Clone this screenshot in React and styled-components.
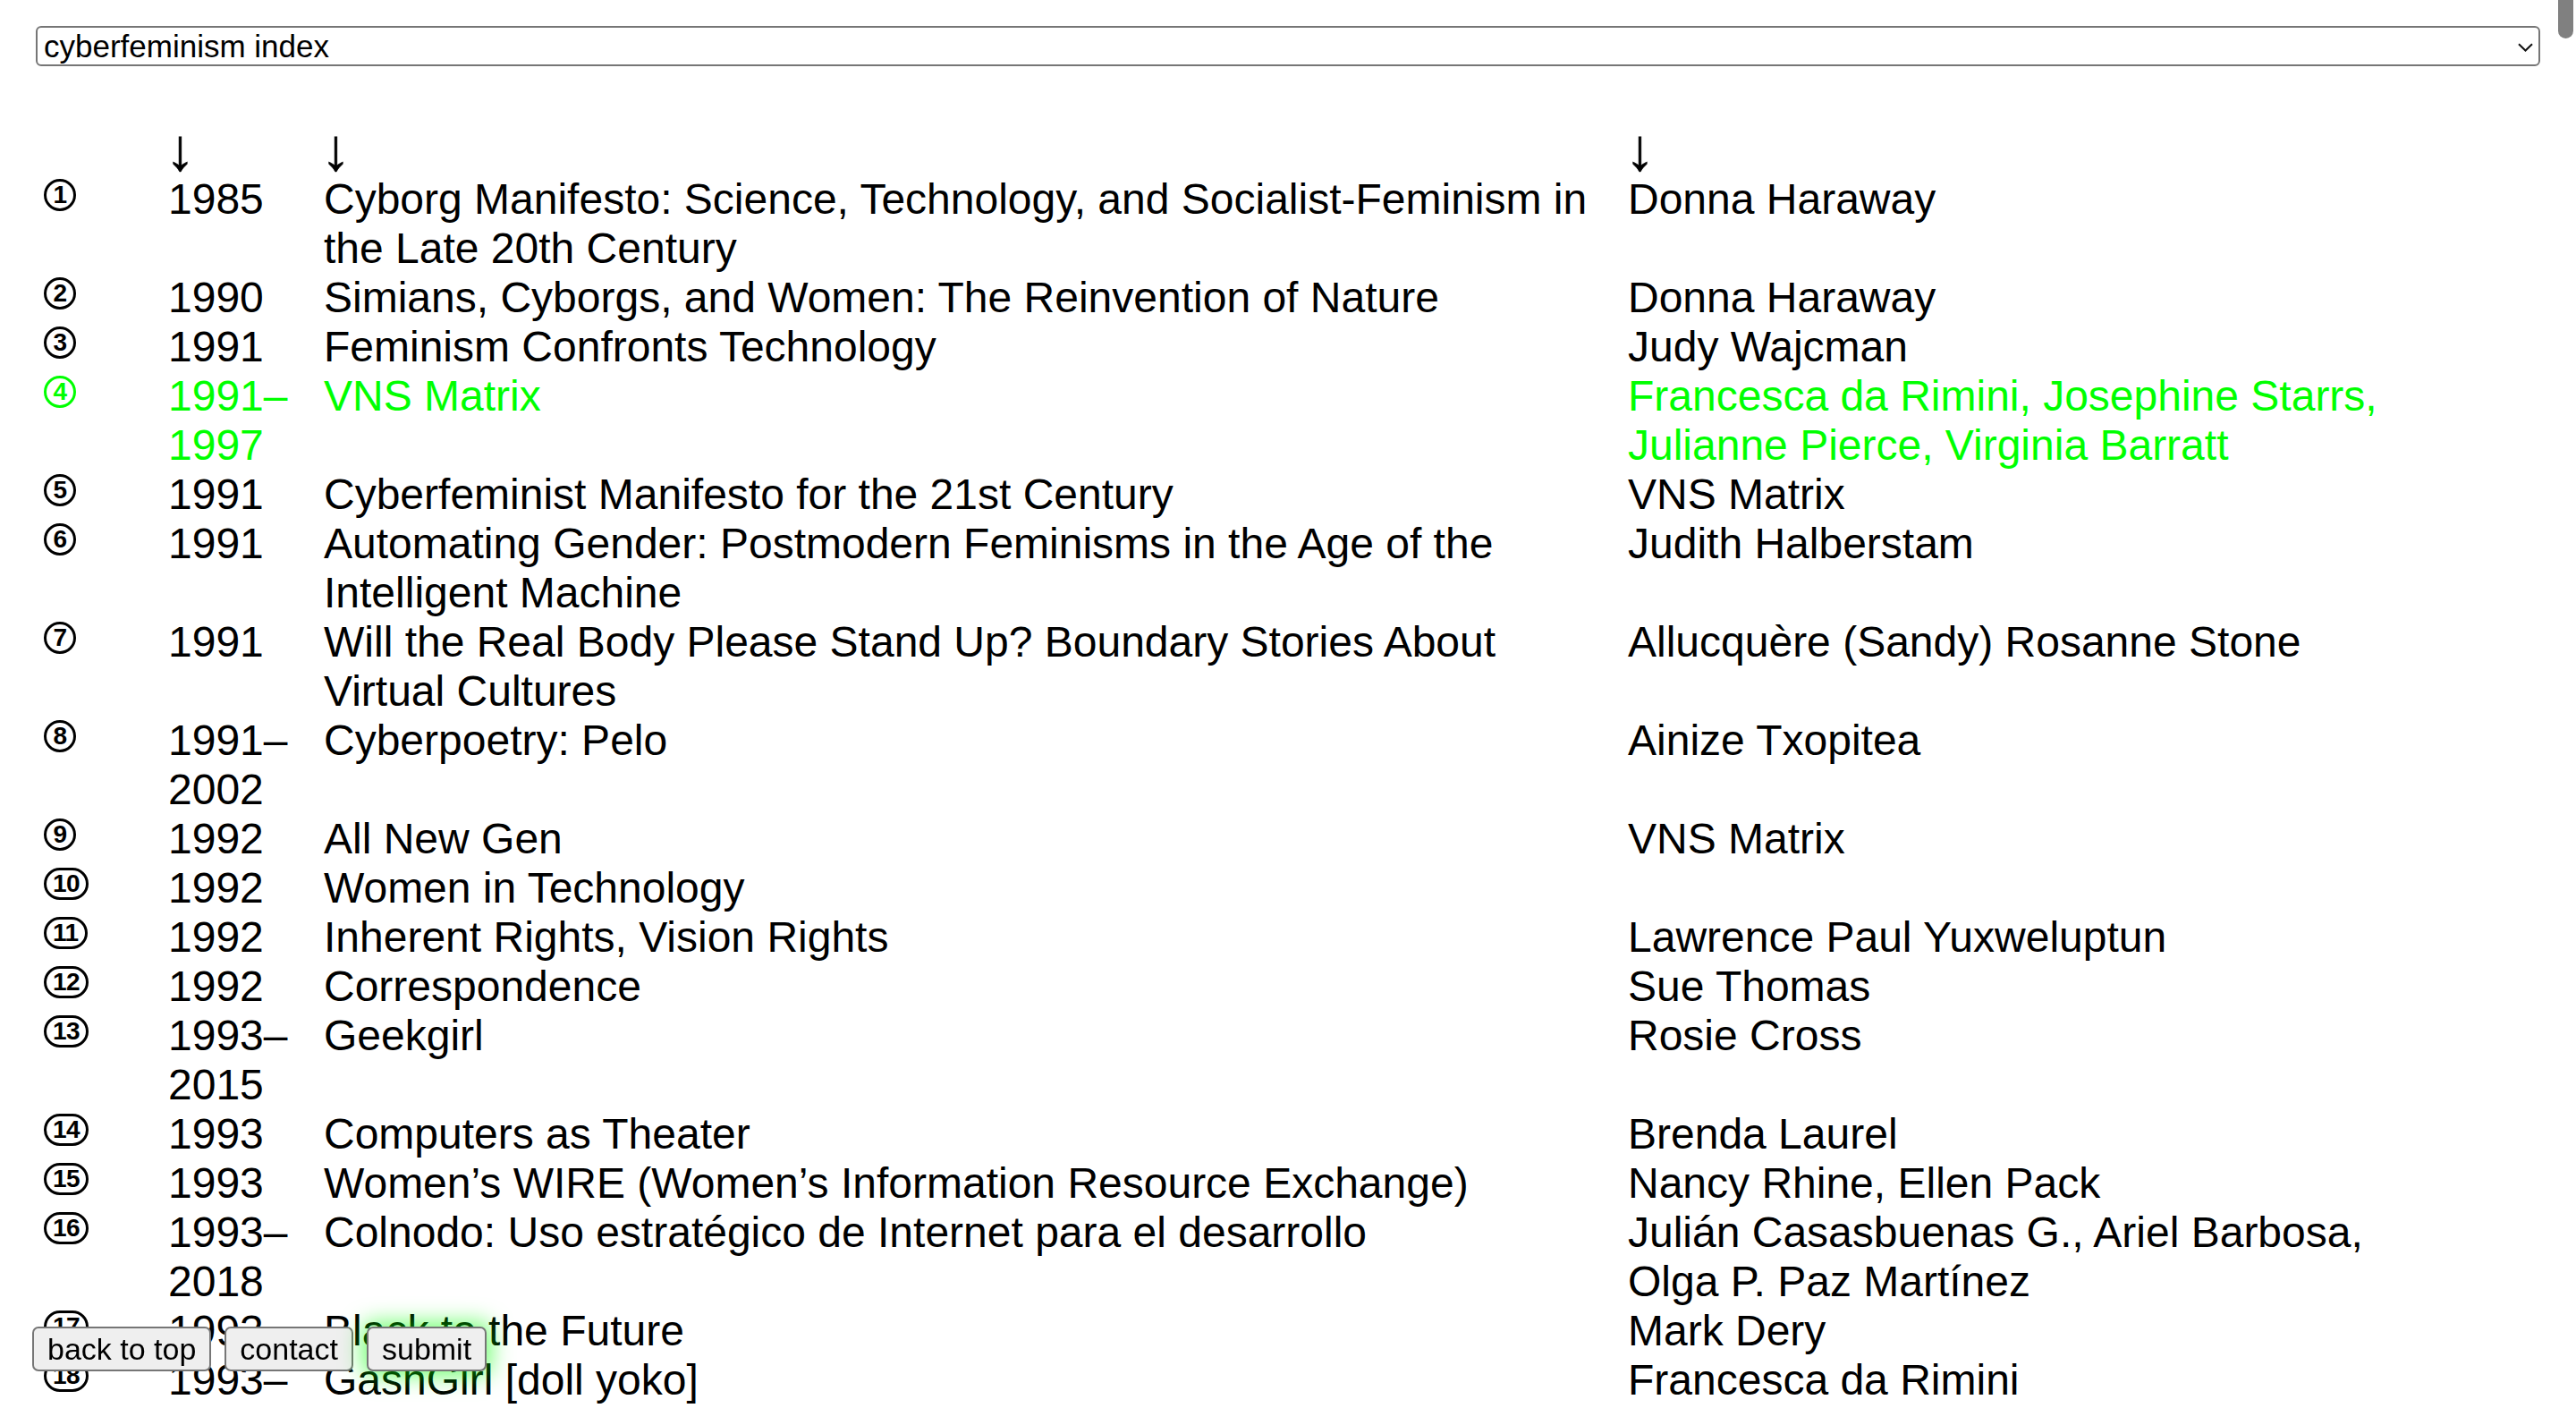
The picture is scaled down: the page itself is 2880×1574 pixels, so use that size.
import styled, { createGlobalStyle } from "styled-components";

const Global = createGlobalStyle`
  html, body {
    margin: 0;
    padding: 0;
    overflow: hidden;
    background: #fff;
  }
  body {
    font-family: "Liberation Sans", Arial, Helvetica, sans-serif;
    color: #000;
  }
  ::-webkit-scrollbar { display: none; }
`;

const GREEN = "#00ff00";

const Page = styled.div`
  padding: 29px 40px 0 40px;
  height: 1574px;
  box-sizing: border-box;
`;

const SelectWrap = styled.div`
  position: relative;
`;

const Select = styled.select`
  appearance: none;
  -webkit-appearance: none;
  display: block;
  width: 100%;
  height: 45px;
  box-sizing: border-box;
  border: 2px solid #767676;
  border-radius: 6px;
  background: #fff;
  color: #000;
  font-family: "Liberation Sans", Arial, sans-serif;
  font-size: 35px;
  padding: 0 7px;
  margin: 0;
`;

const Chevron = styled.svg`
  position: absolute;
  right: 8px;
  top: 19px;
  width: 17px;
  height: 10px;
  pointer-events: none;
`;

const Table = styled.div`
  margin-top: 66px;
`;

const Row = styled.div`
  display: grid;
  grid-template-columns: 148px 174px 1458px 880px;
  font-size: 48px;
  line-height: 55px;
  color: ${(p) => (p.$active ? GREEN : "#000")};
`;

const IndexCell = styled.div`
  padding-left: 9px;
  padding-top: 5px;
  display: flex;
  align-items: flex-start;
`;

const Pill = styled.span`
  display: inline-flex;
  align-items: center;
  justify-content: center;
  box-sizing: border-box;
  height: 36px;
  min-width: 36px;
  padding: 0 7px;
  border: 3.5px solid currentColor;
  border-radius: 18px;
  font-size: 28px;
  font-weight: 700;
  line-height: 1;
  letter-spacing: -0.5px;
`;

const Cell = styled.div`
  padding-right: ${(p) => p.$pad || 0}px;
`;

const Arrow = styled.div`
  font-size: 66px;
  line-height: 55px;
  height: 55px;
  margin-left: -3px;
  -webkit-text-stroke: 0.6px #000;
`;

const Buttons = styled.div`
  position: fixed;
  left: 36px;
  bottom: 41px;
  display: flex;
  gap: 15px;
`;

const Button = styled.button`
  font-family: "Liberation Sans", Arial, sans-serif;
  font-size: 34px;
  line-height: 39px;
  color: #000;
  background: #efefef;
  border: 2px solid #767676;
  border-radius: 7px;
  padding: 4px 15px 3px;
  margin: 0;
  box-shadow: ${(p) => (p.$glow ? "0 0 24px 5px rgba(0, 255, 0, 0.55)" : "none")};
`;

const Thumb = styled.div`
  position: fixed;
  top: 0;
  right: 3px;
  width: 17px;
  height: 43px;
  border-radius: 0 0 9px 9px;
  background: #808080;
`;

const entries = [
  ["1985", "Cyborg Manifesto: Science, Technology, and Socialist-Feminism in the Late 20th Century", "Donna Haraway"],
  ["1990", "Simians, Cyborgs, and Women: The Reinvention of Nature", "Donna Haraway"],
  ["1991", "Feminism Confronts Technology", "Judy Wajcman"],
  ["1991–1997", "VNS Matrix", "Francesca da Rimini, Josephine Starrs, Julianne Pierce, Virginia Barratt", true],
  ["1991", "Cyberfeminist Manifesto for the 21st Century", "VNS Matrix"],
  ["1991", "Automating Gender: Postmodern Feminisms in the Age of the Intelligent Machine", "Judith Halberstam"],
  ["1991", "Will the Real Body Please Stand Up? Boundary Stories About Virtual Cultures", "Allucquère (Sandy) Rosanne Stone"],
  ["1991–2002", "Cyberpoetry: Pelo", "Ainize Txopitea"],
  ["1992", "All New Gen", "VNS Matrix"],
  ["1992", "Women in Technology", ""],
  ["1992", "Inherent Rights, Vision Rights", "Lawrence Paul Yuxweluptun"],
  ["1992", "Correspondence", "Sue Thomas"],
  ["1993–2015", "Geekgirl", "Rosie Cross"],
  ["1993", "Computers as Theater", "Brenda Laurel"],
  ["1993", "Women’s WIRE (Women’s Information Resource Exchange)", "Nancy Rhine, Ellen Pack"],
  ["1993–2018", "Colnodo: Uso estratégico de Internet para el desarrollo", "Julián Casasbuenas G., Ariel Barbosa, Olga P. Paz Martínez"],
  ["1993", "Black to the Future", "Mark Dery"],
  ["1993–1997", "GashGirl [doll yoko]", "Francesca da Rimini"],
  ["1994", "Old Boys Network", "Cornelia Sollfrank"],
];

export default function App() {
  return (
    <>
      <Global />
      <Page>
        <SelectWrap>
          <Select defaultValue="index">
            <option value="index">cyberfeminism index</option>
          </Select>
          <Chevron viewBox="0 0 17 10">
            <path d="M1 1.2 L8.5 8.5 L16 1.2" fill="none" stroke="#111" strokeWidth="2" />
          </Chevron>
        </SelectWrap>

        <Table>
          <Row>
            <div />
            <Arrow>↓</Arrow>
            <Arrow>↓</Arrow>
            <Arrow>↓</Arrow>
          </Row>
          {entries.map(([year, title, author, active], i) => (
            <Row key={i} $active={active}>
              <IndexCell>
                <Pill>{i + 1}</Pill>
              </IndexCell>
              <Cell>{year}</Cell>
              <Cell $pad={30}>{title}</Cell>
              <Cell>{author}</Cell>
            </Row>
          ))}
        </Table>
      </Page>

      <Buttons>
        <Button>back to top</Button>
        <Button>contact</Button>
        <Button $glow>submit</Button>
      </Buttons>
      <Thumb />
    </>
  );
}
